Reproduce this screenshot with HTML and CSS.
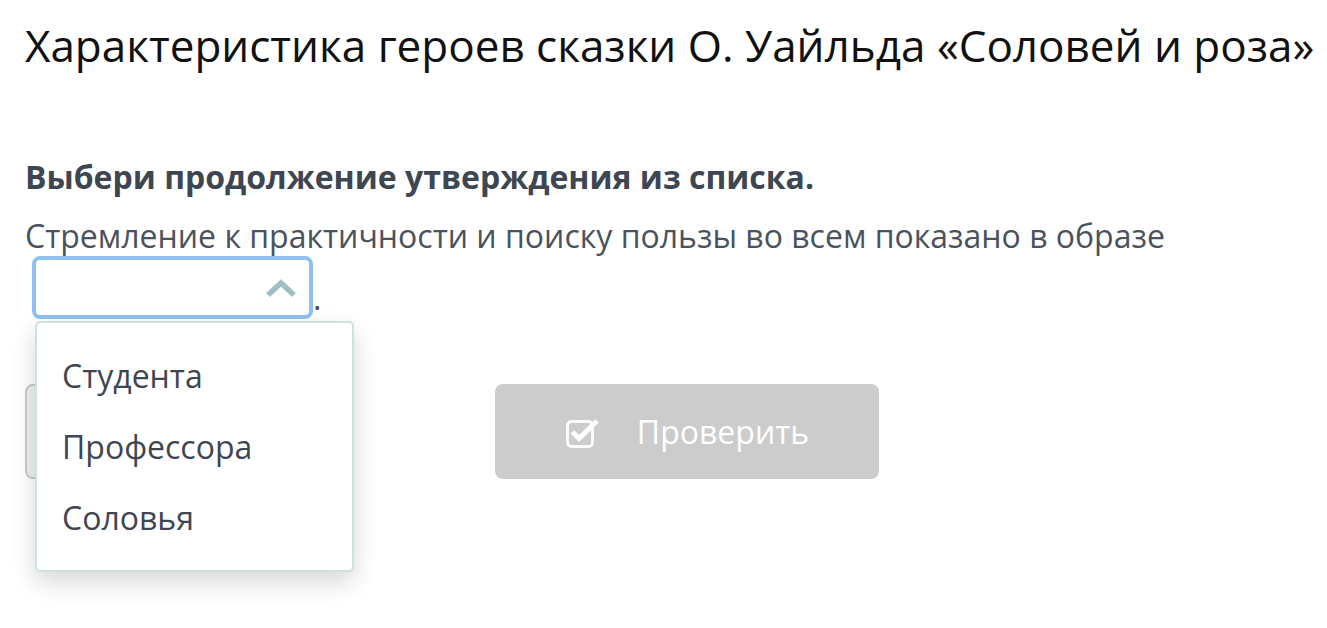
FILE: index.html
```html
<!DOCTYPE html>
<html lang="ru">
<head>
  <meta charset="UTF-8" />
  <title>Соловей и роза</title>
  <link rel="stylesheet" href="styles.css">
</head>
<body>

  <h1 class="title">Характеристика героев сказки О. Уайльда «Соловей и роза»</h1>

  <div class="task">
    <div class="hint">Выбери продолжение утверждения из списка.</div>

    <div class="statement">
      Стремление к практичности и поиску пользы во всем показано в образе
      <span class="select-wrap">
        <span class="select">
          <svg class="chevron" width="32" height="20" viewBox="0 0 32 20">
            <path d="M3 17 L16 5 L29 17" fill="none" stroke="#9dc0c4" stroke-width="5.5" />
          </svg>
        </span>
        <span class="options">
          <span class="option">Студента</span>
          <span class="option">Профессора</span>
          <span class="option">Соловья</span>
        </span>
      </span>.
    </div>

    <div class="actions">
      <button class="btn-answer"></button>
      <button class="btn-check">
        <svg width="36" height="34" viewBox="0 0 36 34">
          <rect x="2.5" y="6.5" width="25" height="25" rx="4" fill="none" stroke="#fff" stroke-width="2.8" />
          <path d="M7.5 17 L14 23.5 L32 6" fill="none" stroke="#fff" stroke-width="5" />
        </svg>
        <span>Проверить</span>
      </button>
    </div>
  </div>

</body>
</html>
```

FILE: styles.css
```css
body {
  margin: 0;
  padding: 0 25px;
  min-height: 100vh;
  box-sizing: border-box;
  background: #fff;
  font-family: 'Open Sans', 'Noto Sans', sans-serif;
  color: #414955;
}

.title {
  margin: 16px 0 0;
  font-size: 44px;
  font-weight: 400;
  line-height: 58px;
  white-space: nowrap;
  color: #111;
}

.task {
  margin-top: 81px;
}

.hint {
  font-size: 32px;
  font-weight: 700;
  line-height: 44px;
  color: #3e4652;
}

.statement {
  margin-top: 17px;
  font-size: 32px;
  line-height: 40px;
  color: #4a525d;
}

.select-wrap {
  position: relative;
  display: inline-block;
  vertical-align: 12px;
  margin-left: 7px;
}

.select {
  display: flex;
  align-items: center;
  justify-content: flex-end;
  box-sizing: border-box;
  width: 281px;
  height: 63px;
  padding-right: 12px;
  border: 4px solid #8fc1ef;
  border-radius: 8px;
  background: #fff;
}

.options {
  position: absolute;
  top: 65px;
  left: 3px;
  z-index: 2;
  display: flex;
  flex-direction: column;
  width: 319px;
  box-sizing: border-box;
  padding: 17px 0 17px 25px;
  background: #fff;
  border: 2px solid #cfe0e1;
  border-radius: 5px;
  box-shadow: 0 10px 24px rgba(0, 0, 0, 0.16);
  font-size: 32px;
  line-height: 71px;
  color: #3f4651;
}

.actions {
  display: flex;
  gap: 150px;
  margin-top: 65px;
}

.btn-answer {
  width: 320px;
  height: 95px;
  border: 2px solid #c5cacf;
  border-radius: 8px;
  background: #eef0f2;
}

.btn-check {
  display: flex;
  align-items: center;
  justify-content: center;
  gap: 36px;
  width: 384px;
  height: 95px;
  border: none;
  border-radius: 8px;
  background: #cccccc;
  color: #fff;
  font-family: 'Open Sans', sans-serif;
  font-size: 32px;
}
```
